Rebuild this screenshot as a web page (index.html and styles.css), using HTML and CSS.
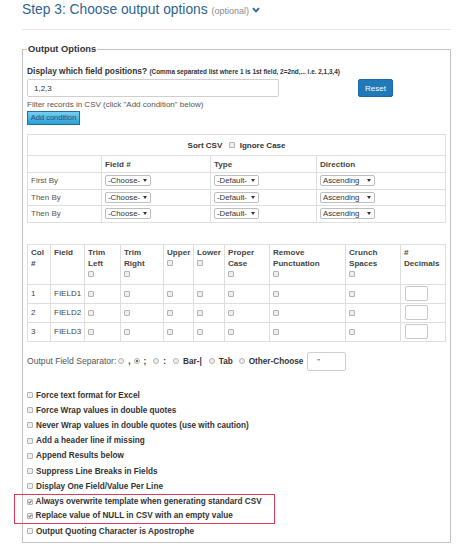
FILE: index.html
```html
<!DOCTYPE html>
<html lang="en">
<head>
<meta charset="utf-8">
<title>Step 3: Choose output options</title>
<link rel="stylesheet" href="styles.css">
</head>
<body>
<div class="page">
  <h2 class="step">Step 3: Choose output options <span class="opt">(optional)</span><svg class="chev" width="8" height="6" viewBox="0 0 8 6"><polyline points="1,1.2 4,4.4 7,1.2" fill="none" stroke="#2c6aa0" stroke-width="1.9"/></svg></h2>
  <hr class="rule">
  <fieldset class="box">
    <legend>Output Options</legend>
    <div class="lbl">Display which field positions? <span class="hint">(Comma separated list where 1 is 1st field, 2=2nd,... i.e. 2,1,3,4)</span></div>
    <div class="posrow">
      <input class="txt" type="text" value="1,2,3">
      <button class="reset" type="button">Reset</button>
    </div>
    <div class="filter">Filter records in CSV (click "Add condition" below)</div>
    <button class="addc" type="button">Add condition</button>

    <table class="sort">
      <colgroup><col class="s1"><col class="s2"><col class="s3"><col class="s4"></colgroup>
      <tr class="caprow"><th colspan="4" class="cap">Sort CSV <span class="cb capcb"></span> Ignore Case</th></tr>
      <tr class="hrow"><th></th><th>Field #</th><th>Type</th><th>Direction</th></tr>
      <tr class="drow"><td>First By</td>
        <td><span class="sel w1">-Choose-<svg class="arr" width="4" height="3" viewBox="0 0 4 3"><polygon points="0,0 4,0 2,3" fill="#333"/></svg></span></td>
        <td><span class="sel w2">-Default-<svg class="arr" width="4" height="3" viewBox="0 0 4 3"><polygon points="0,0 4,0 2,3" fill="#333"/></svg></span></td>
        <td><span class="sel w3">Ascending<svg class="arr" width="4" height="3" viewBox="0 0 4 3"><polygon points="0,0 4,0 2,3" fill="#333"/></svg></span></td></tr>
      <tr class="drow"><td>Then By</td>
        <td><span class="sel w1">-Choose-<svg class="arr" width="4" height="3" viewBox="0 0 4 3"><polygon points="0,0 4,0 2,3" fill="#333"/></svg></span></td>
        <td><span class="sel w2">-Default-<svg class="arr" width="4" height="3" viewBox="0 0 4 3"><polygon points="0,0 4,0 2,3" fill="#333"/></svg></span></td>
        <td><span class="sel w3">Ascending<svg class="arr" width="4" height="3" viewBox="0 0 4 3"><polygon points="0,0 4,0 2,3" fill="#333"/></svg></span></td></tr>
      <tr class="drow"><td>Then By</td>
        <td><span class="sel w1">-Choose-<svg class="arr" width="4" height="3" viewBox="0 0 4 3"><polygon points="0,0 4,0 2,3" fill="#333"/></svg></span></td>
        <td><span class="sel w2">-Default-<svg class="arr" width="4" height="3" viewBox="0 0 4 3"><polygon points="0,0 4,0 2,3" fill="#333"/></svg></span></td>
        <td><span class="sel w3">Ascending<svg class="arr" width="4" height="3" viewBox="0 0 4 3"><polygon points="0,0 4,0 2,3" fill="#333"/></svg></span></td></tr>
    </table>

    <table class="cols">
      <colgroup><col class="c1"><col class="c2"><col class="c3"><col class="c4"><col class="c5"><col class="c6"><col class="c7"><col class="c8"><col class="c9"><col class="c10"></colgroup>
      <tr class="chead">
        <th>Col<br>#</th>
        <th>Field</th>
        <th>Trim<br>Left<div class="cbl"><span class="cb"></span></div></th>
        <th>Trim<br>Right<div class="cbl"><span class="cb"></span></div></th>
        <th>Upper<div class="cbl"><span class="cb"></span></div></th>
        <th>Lower<div class="cbl"><span class="cb"></span></div></th>
        <th>Proper<br>Case<div class="cbl"><span class="cb"></span></div></th>
        <th>Remove<br>Punctuation<div class="cbl"><span class="cb"></span></div></th>
        <th>Crunch<br>Spaces<div class="cbl"><span class="cb"></span></div></th>
        <th>#<br>Decimals</th>
      </tr>
      <tr class="crow"><td>1</td><td>FIELD1</td><td><span class="cb"></span></td><td><span class="cb"></span></td><td><span class="cb"></span></td><td><span class="cb"></span></td><td><span class="cb"></span></td><td><span class="cb"></span></td><td><span class="cb"></span></td><td><input class="dec" type="text"></td></tr>
      <tr class="crow"><td>2</td><td>FIELD2</td><td><span class="cb"></span></td><td><span class="cb"></span></td><td><span class="cb"></span></td><td><span class="cb"></span></td><td><span class="cb"></span></td><td><span class="cb"></span></td><td><span class="cb"></span></td><td><input class="dec" type="text"></td></tr>
      <tr class="crow"><td>3</td><td>FIELD3</td><td><span class="cb"></span></td><td><span class="cb"></span></td><td><span class="cb"></span></td><td><span class="cb"></span></td><td><span class="cb"></span></td><td><span class="cb"></span></td><td><span class="cb"></span></td><td><input class="dec" type="text"></td></tr>
    </table>

    <div class="sep">
      <span class="seplbl">Output Field Separator:</span>
      <span class="r r1"><span class="rd"></span><b>,</b></span>
      <span class="r r2"><span class="rd on"></span><b>;</b></span>
      <span class="r r3"><span class="rd"></span><b>:</b></span>
      <span class="r r4"><span class="rd"></span><b>Bar-|</b></span>
      <span class="r r5"><span class="rd"></span><b>Tab</b></span>
      <span class="r r6"><span class="rd"></span><b>Other-Choose</b></span>
      <input class="other" type="text" value="&quot;">
    </div>

    <div class="opts">
      <div class="o"><span class="cb"></span>Force text format for Excel</div>
      <div class="o"><span class="cb"></span>Force Wrap values in double quotes</div>
      <div class="o"><span class="cb"></span>Never Wrap values in double quotes (use with caution)</div>
      <div class="o"><span class="cb"></span>Add a header line if missing</div>
      <div class="o"><span class="cb"></span>Append Results below</div>
      <div class="o"><span class="cb"></span>Suppress Line Breaks in Fields</div>
      <div class="o"><span class="cb"></span>Display One Field/Value Per Line</div>
      <div class="hl">
        <div class="o oh"><span class="cb on"><svg width="4" height="4" viewBox="0 0 4 4"><polyline points="0.4,2 1.5,3.1 3.6,0.7" fill="none" stroke="#333" stroke-width="0.9"/></svg></span>Always overwrite template when generating standard CSV</div>
        <div class="o oh"><span class="cb on"><svg width="4" height="4" viewBox="0 0 4 4"><polyline points="0.4,2 1.5,3.1 3.6,0.7" fill="none" stroke="#333" stroke-width="0.9"/></svg></span>Replace value of NULL in CSV with an empty value</div>
      </div>
      <div class="o"><span class="cb"></span>Output Quoting Character is Apostrophe</div>
    </div>
  </fieldset>
</div>
</body>
</html>
```

FILE: styles.css
```css
html, body {
  margin: 0;
  padding: 0;
  background: #fff;
}
body {
  font-family: "Liberation Sans", Arial, Helvetica, sans-serif;
  color: #333;
}
.page {
  margin-left: 22px;
  width: 429px;
}
.step {
  margin: 0;
  font-size: 13.8px;
  font-weight: normal;
  line-height: 20px;
  color: #2e6393;
  white-space: nowrap;
}
.opt {
  font-size: 9px;
  color: #8a8a8a;
}
.chev {
  margin-left: 3px;
  vertical-align: 1px;
}
.rule {
  margin: 8px 0 0;
  height: 0;
  border: 0;
  border-top: 1px solid #e6e6e6;
}
.box {
  margin: 13px 0 0;
  padding: 10px 5px 3px 4px;
  border: 1px solid #c2c2c2;
  min-width: 0;
}
.box legend {
  padding: 0 1px;
  font-size: 9.3px;
  font-weight: bold;
  line-height: 12px;
  color: #333;
}
.lbl {
  font-size: 8.4px;
  font-weight: bold;
  line-height: 12px;
  color: #333;
  white-space: nowrap;
}
.hint {
  font-size: 6.4px;
}
.posrow {
  display: flex;
  align-items: center;
  margin-top: 1px;
  height: 18px;
}
.txt {
  box-sizing: border-box;
  width: 252px;
  height: 18px;
  margin: 0;
  padding: 0 6px;
  border: 1px solid #cfcfcf;
  border-radius: 2px;
  font-family: inherit;
  font-size: 8px;
  color: #333;
}
.reset {
  box-sizing: border-box;
  margin: 0 0 0 79px;
  width: 35px;
  height: 18px;
  padding: 0;
  border: 1px solid #1b6aa3;
  border-radius: 2px;
  background: #2079b8;
  color: #fff;
  font-family: inherit;
  font-size: 8px;
}
.filter {
  margin-top: 3px;
  font-size: 8px;
  line-height: 10px;
  color: #555;
}
.addc {
  display: block;
  box-sizing: border-box;
  margin: 1px 0 0;
  width: 53px;
  height: 14px;
  padding: 0;
  border: 1px solid #2a6c9e;
  background: linear-gradient(#74cff2, #2a9fd8);
  color: #1c4d84;
  font-family: inherit;
  font-size: 7.5px;
  line-height: 12px;
}
.sort, .cols {
  width: 418px;
  table-layout: fixed;
  border-collapse: collapse;
}
.sort {
  margin-top: 9px;
}
.sort th, .sort td, .cols th, .cols td {
  border: 1px solid #dedede;
  padding: 0 3px;
  white-space: nowrap;
}
.s1 { width: 74px; }
.s2 { width: 109px; }
.s3 { width: 106px; }
.s4 { width: 129px; }
.caprow { height: 21px; }
.cap {
  text-align: center;
  font-size: 8px;
  font-weight: bold;
  color: #333;
}
.capcb {
  margin: 0 2px 0 5px;
}
.hrow { height: 17px; }
.hrow th {
  text-align: left;
  font-size: 8.1px;
  font-weight: bold;
  color: #444;
}
.drow { height: 16.5px; }
.drow td {
  font-size: 8px;
  color: #555;
  vertical-align: middle;
}
.sel {
  display: inline-flex;
  align-items: center;
  justify-content: space-between;
  box-sizing: border-box;
  height: 11px;
  padding: 0 3px 0 2px;
  border: 1px solid #bdbdbd;
  border-radius: 2px;
  background: #fff;
  font-size: 7.8px;
  color: #333;
  vertical-align: middle;
}
.w1 { width: 46px; }
.w2 { width: 45px; }
.w3 { width: 55px; }
.cols {
  margin-top: 21px;
}
.c1 { width: 23px; }
.c2 { width: 34px; }
.c3 { width: 36px; }
.c4 { width: 43px; }
.c5 { width: 30px; }
.c6 { width: 31px; }
.c7 { width: 45px; }
.c8 { width: 76px; }
.c9 { width: 55px; }
.c10 { width: 45px; }
.chead { height: 40px; }
.chead th {
  vertical-align: top;
  text-align: left;
  padding-top: 2px;
  font-size: 8.1px;
  font-weight: bold;
  line-height: 11px;
  color: #444;
}
.cbl {
  height: 11px;
  display: flex;
  align-items: center;
}
.crow { height: 19px; }
.crow td {
  font-size: 8px;
  color: #444;
  vertical-align: middle;
}
.cb {
  display: inline-flex;
  align-items: center;
  justify-content: center;
  box-sizing: border-box;
  width: 6px;
  height: 6px;
  border: 1px solid #b3b3b3;
  border-radius: 1px;
  background: #efefef;
  vertical-align: middle;
  flex: none;
}
.dec {
  display: block;
  box-sizing: border-box;
  width: 23px;
  height: 15px;
  margin: 0 0 0 1px;
  padding: 0;
  border: 1px solid #c8c8c8;
  border-radius: 2px;
}
.sep {
  display: flex;
  align-items: center;
  margin-top: 10px;
  height: 19px;
  white-space: nowrap;
}
.seplbl {
  font-size: 8.6px;
  color: #555;
}
.r {
  display: inline-flex;
  align-items: center;
  gap: 4px;
  font-size: 8.2px;
  color: #333;
}
.r1 { margin-left: 2px; }
.r2 { margin-left: 3px; }
.r3 { margin-left: 7px; }
.r4 { margin-left: 7px; }
.r5 { margin-left: 7px; }
.r6 { margin-left: 6px; }
.rd {
  display: inline-flex;
  align-items: center;
  justify-content: center;
  box-sizing: border-box;
  width: 6px;
  height: 6px;
  border: 1px solid #b3b3b3;
  border-radius: 50%;
  background: #efefef;
}
.rd.on::after {
  content: "";
  width: 2px;
  height: 2px;
  border-radius: 50%;
  background: #444;
}
.other {
  box-sizing: border-box;
  margin: 0 0 0 4px;
  width: 39px;
  height: 19px;
  padding: 0 0 0 9px;
  border: 1px solid #cfcfcf;
  border-radius: 2px;
  font-family: inherit;
  font-size: 8px;
  color: #333;
}
.opts {
  margin-top: 17px;
}
.o {
  display: flex;
  align-items: center;
  gap: 3px;
  height: 15.2px;
  font-size: 8.2px;
  font-weight: bold;
  color: #333;
  white-space: nowrap;
}
.hl {
  box-sizing: border-box;
  width: 261px;
  margin-left: -13px;
  padding-left: 11.5px;
  border: 1.5px solid #db3c5a;
}
.oh {
  height: 14px;
}
```
